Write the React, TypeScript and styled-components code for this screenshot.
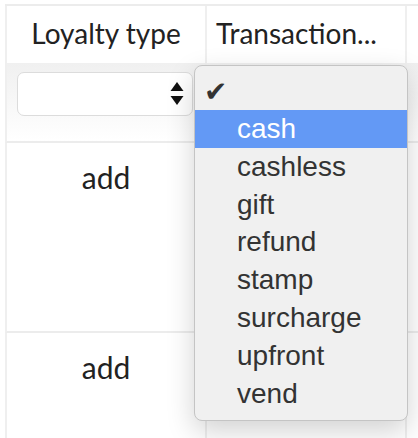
import React from 'react';
import styled, { createGlobalStyle } from 'styled-components';

const GlobalStyle = createGlobalStyle`
  html, body {
    margin: 0;
    padding: 0;
    background: #fff;
    overflow: hidden;
  }
`;

const options = ['cash', 'cashless', 'gift', 'refund', 'stamp', 'surcharge', 'upfront', 'vend'];

const Page = styled.div`
  position: relative;
  width: 418px;
  height: 438px;
  padding: 4px 0 0 5px;
  box-sizing: border-box;
  overflow: hidden;
`;

const Table = styled.div`
  display: grid;
  grid-template-columns: 200px 200px 200px;
  grid-template-rows: 57px 80px 190px 120px;
  border-top: 2px solid #ececec;
  font-family: Lato, 'Open Sans', sans-serif;
  color: #222;
`;

const HeadCell = styled.div<{ $align?: string }>`
  border-left: 2px solid #efefef;
  display: flex;
  align-items: center;
  justify-content: ${(p) => p.$align || 'center'};
  padding: 0 9px 4px;
  font-size: 28px;
  white-space: nowrap;
  overflow: hidden;
`;

const FilterCell = styled.div`
  border-left: 2px solid #efefef;
  border-bottom: 2px solid #ececec;
  background: linear-gradient(#f0f0f0, #f8f8f8 55%, #fff);
  padding: 9px 11px 0 10px;
`;

const BodyCell = styled.div`
  border-left: 2px solid #efefef;
  border-bottom: 2px solid #ececec;
  text-align: center;
  font-size: 30px;
  padding-top: 16px;
`;

const SelectBox = styled.div`
  width: 176px;
  height: 44px;
  box-sizing: border-box;
  border: 1px solid #dcdcdc;
  border-radius: 7px;
  background: #fff;
  display: flex;
  align-items: center;
  justify-content: flex-end;
  padding-right: 8px;
`;

const Menu = styled.div`
  position: absolute;
  left: 194px;
  top: 65px;
  width: 214px;
  height: 356px;
  box-sizing: border-box;
  background: #f0f0f0;
  border: 1px solid #c4c4c4;
  border-radius: 8px;
  padding: 6px 0;
  box-shadow: 0 10px 28px rgba(0, 0, 0, 0.18);
  font-family: 'Liberation Sans', Arial, sans-serif;
  font-size: 28px;
  color: #333;
`;

const CheckRow = styled.div`
  height: 38px;
  padding-left: 9px;
  display: flex;
  align-items: center;
  font-size: 28px;
  font-family: 'DejaVu Sans', sans-serif;
  color: #333;
`;

const Option = styled.div<{ $active?: boolean }>`
  height: 37.8px;
  line-height: 37.8px;
  padding-left: 42px;
  background: ${(p) => (p.$active ? '#6399f5' : 'transparent')};
  color: ${(p) => (p.$active ? '#fff' : '#333')};
`;

const Arrows = () => (
  <svg width="14" height="26" viewBox="0 0 14 26">
    <polygon points="7,1 13.5,10 0.5,10" fill="#111" />
    <polygon points="0.5,15 13.5,15 7,24" fill="#111" />
  </svg>
);

export default function App() {
  return (
    <Page>
      <GlobalStyle />
      <Table>
        <HeadCell>Loyalty type</HeadCell>
        <HeadCell $align="flex-start">Transaction...</HeadCell>
        <HeadCell />
        <FilterCell>
          <SelectBox>
            <Arrows />
          </SelectBox>
        </FilterCell>
        <FilterCell />
        <FilterCell />
        <BodyCell>add</BodyCell>
        <BodyCell />
        <BodyCell />
        <BodyCell>add</BodyCell>
        <BodyCell />
        <BodyCell />
      </Table>
      <Menu>
        <CheckRow>✔</CheckRow>
        {options.map((o) => (
          <Option key={o} $active={o === 'cash'}>
            {o}
          </Option>
        ))}
      </Menu>
    </Page>
  );
}
